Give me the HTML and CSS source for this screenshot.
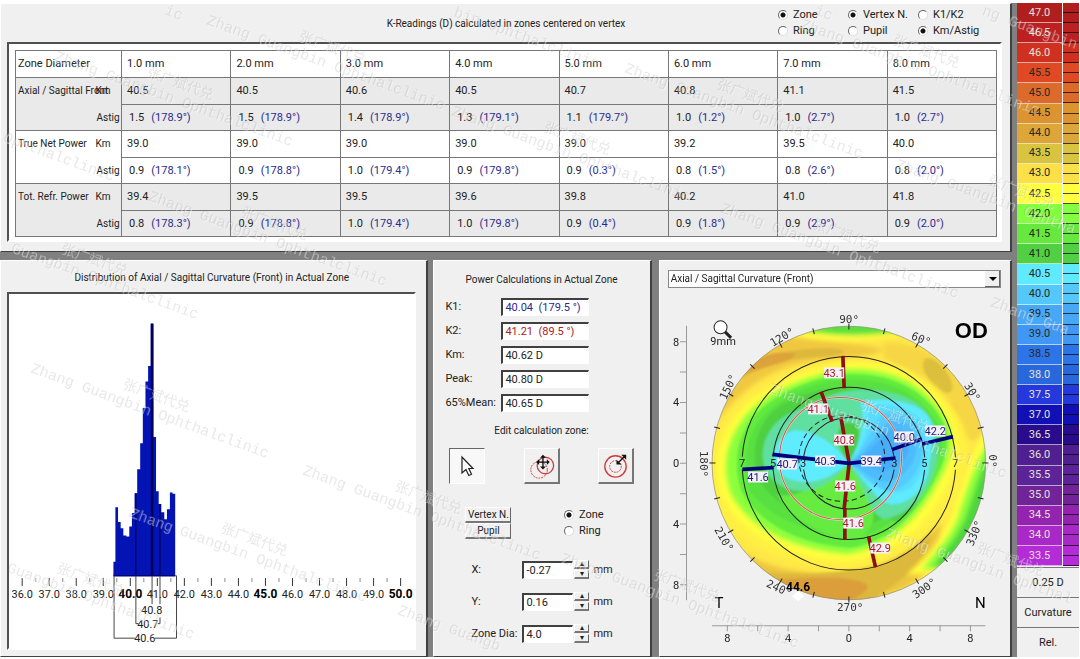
FILE: index.html
```html
<!DOCTYPE html>
<html lang="en">
<head>
<meta charset="utf-8">
<title>Power Distribution</title>
<link rel="stylesheet" href="styles.css">
</head>
<body>
<div class="app">
  <main class="main">
    <section class="panel readings">
      <header class="readings-head">
        <h1 class="title">K-Readings (D) calculated in zones centered on vertex</h1>
        <div class="options">
          <label class="opt"><input type="radio" name="shape" checked>Zone</label>
          <label class="opt"><input type="radio" name="center" checked>Vertex N.</label>
          <label class="opt"><input type="radio" name="mode">K1/K2</label>
          <label class="opt"><input type="radio" name="shape">Ring</label>
          <label class="opt"><input type="radio" name="center">Pupil</label>
          <label class="opt"><input type="radio" name="mode" checked>Km/Astig</label>
        </div>
      </header>
      <div class="sunken table-box">
        <table class="k-table">
          <colgroup><col class="col-name"><col class="col-kind"><col span="8"></colgroup>
          <thead>
            <tr><th colspan="2" class="zone">Zone Diameter</th><th>1.0 mm</th><th>2.0 mm</th><th>3.0 mm</th><th>4.0 mm</th><th>5.0 mm</th><th>6.0 mm</th><th>7.0 mm</th><th>8.0 mm</th></tr>
          </thead>
          <tbody class="shade">
            <tr><th rowspan="2" class="name">Axial / Sagittal Front</th><th class="kind">Km</th><td>40.5</td><td>40.5</td><td>40.6</td><td>40.5</td><td>40.7</td><td>40.8</td><td>41.1</td><td>41.5</td></tr>
            <tr class="astig"><th class="kind">Astig</th><td>1.5<i>(178.9°)</i></td><td>1.5<i>(178.9°)</i></td><td>1.4<i>(178.9°)</i></td><td>1.3<i>(179.1°)</i></td><td>1.1<i>(179.7°)</i></td><td>1.0<i>(1.2°)</i></td><td>1.0<i>(2.7°)</i></td><td>1.0<i>(2.7°)</i></td></tr>
          </tbody>
          <tbody>
            <tr><th rowspan="2" class="name">True Net Power</th><th class="kind">Km</th><td>39.0</td><td>39.0</td><td>39.0</td><td>39.0</td><td>39.0</td><td>39.2</td><td>39.5</td><td>40.0</td></tr>
            <tr class="astig"><th class="kind">Astig</th><td>0.9<i>(178.1°)</i></td><td>0.9<i>(178.8°)</i></td><td>1.0<i>(179.4°)</i></td><td>0.9<i>(179.8°)</i></td><td>0.9<i>(0.3°)</i></td><td>0.8<i>(1.5°)</i></td><td>0.8<i>(2.6°)</i></td><td>0.8<i>(2.0°)</i></td></tr>
          </tbody>
          <tbody class="shade">
            <tr><th rowspan="2" class="name">Tot. Refr. Power</th><th class="kind">Km</th><td>39.4</td><td>39.5</td><td>39.5</td><td>39.6</td><td>39.8</td><td>40.2</td><td>41.0</td><td>41.8</td></tr>
            <tr class="astig"><th class="kind">Astig</th><td>0.8<i>(178.3°)</i></td><td>0.9<i>(178.8°)</i></td><td>1.0<i>(179.4°)</i></td><td>1.0<i>(179.8°)</i></td><td>0.9<i>(0.4°)</i></td><td>0.9<i>(1.8°)</i></td><td>0.9<i>(2.9°)</i></td><td>0.9<i>(2.0°)</i></td></tr>
          </tbody>
        </table>
      </div>
    </section>

    <div class="lower">
      <section class="panel histogram">
        <h2 class="title">Distribution of Axial / Sagittal Curvature (Front) in Actual Zone</h2>
        <div class="sunken chart-box">
          <svg class="chart" viewBox="8 294 409 350" role="img" aria-label="Curvature histogram">
            <g transform="translate(0 255) scale(.33333)">
              <path id="bars" fill="#0414b4"/>
              <path d="M453 196h8v763h-8z" fill="#000070"/>
              <path d="M340 959h187" stroke="#000080" stroke-width="4"/>
              <path d="M408 709V959M481 742V959M457 196V959" stroke="#000040" stroke-width="3"/>
              <path d="M342 959V1148H405M466 1148H531V959H527M408 959V1104H416M474 1104H481V1085M457 959V1045M481 959V1045" fill="none" stroke="#444" stroke-width="3"/>
            </g>
            <g id="axis"></g>
            <g class="tick-label">
              <text x="152" y="613">40.8</text><text x="148" y="627">40.7</text><text x="145" y="642">40.6</text>
            </g>
          </svg>
        </div>
      </section>

      <section class="panel power">
        <h2 class="title">Power Calculations in Actual Zone</h2>
        <div class="values">
          <label for="k1">K1:</label><input id="k1" class="field blue" value="40.04  (179.5 °)">
          <label for="k2">K2:</label><input id="k2" class="field red" value="41.21  (89.5 °)">
          <label for="km">Km:</label><input id="km" class="field" value="40.62 D">
          <label for="peak">Peak:</label><input id="peak" class="field" value="40.80 D">
          <label for="mean">65%Mean:</label><input id="mean" class="field" value="40.65 D">
        </div>
        <p class="caption">Edit calculation zone:</p>
        <div class="tools">
          <button class="tool pressed" aria-label="Select"><svg viewBox="0 0 34 34"><path d="M12 8V24L16 20.500L18.800 26.500L21.500 25.300L18.800 19.500H23Z" fill="#fff" stroke="#222" stroke-width="1.200"/></svg></button>
          <button class="tool" aria-label="Move zone"><svg viewBox="0 0 34 34"><circle cx="14.500" cy="21.500" r="8.500" fill="none" stroke="#d03c3c" stroke-dasharray="2 1"/><circle cx="21" cy="17" r="8.500" fill="none" stroke="#d03c3c" stroke-width="1.300"/><path d="M18.500 8V19M13 13.500H24" stroke="#111" stroke-width="1.400"/><path d="M18.500 6l3 3h-6zM18.500 21l3-3h-6zM11.500 13.500l3-3v6zM25.500 13.500l-3-3v6z" fill="#111"/></svg></button>
          <button class="tool" aria-label="Resize zone"><svg viewBox="0 0 34 34"><circle cx="17" cy="18" r="11" fill="none" stroke="#d03c3c" stroke-width="1.400"/><circle cx="17" cy="18" r="6" fill="none" stroke="#d03c3c" stroke-dasharray="2 1"/><path d="M19 15L27 7" stroke="#111" stroke-width="1.300"/><path d="M28 6v5l-5-5zM18 16v-5l5 5z" fill="#111"/></svg></button>
        </div>
        <div class="anchor">
          <div class="anchor-buttons"><button class="push">Vertex N.</button><button class="push">Pupil</button></div>
          <div class="anchor-radios">
            <label class="opt"><input type="radio" name="calc" checked>Zone</label>
            <label class="opt"><input type="radio" name="calc">Ring</label>
          </div>
        </div>
        <div class="position">
          <label for="x">X:</label><input id="x" class="field" value="-0.27"><span class="spin"><button aria-label="Increase X">▴</button><button aria-label="Decrease X">▾</button></span><span>mm</span>
          <label for="y">Y:</label><input id="y" class="field" value="0.16"><span class="spin"><button aria-label="Increase Y">▴</button><button aria-label="Decrease Y">▾</button></span><span>mm</span>
          <label for="dia">Zone Dia:</label><input id="dia" class="field" value="4.0"><span class="spin"><button aria-label="Increase diameter">▴</button><button aria-label="Decrease diameter">▾</button></span><span>mm</span>
        </div>
      </section>

      <section class="panel map">
        <div class="select-wrap">
          <select class="map-select" aria-label="Map type"><option>Axial / Sagittal Curvature (Front)</option></select>
          <span class="arrow" aria-hidden="true"></span>
        </div>
        <svg class="cornea" viewBox="668 289 333 366" role="img" aria-label="Corneal curvature map">
          <defs>
            <clipPath id="disc"><circle cx="596" cy="624" r="410"/></clipPath>
            <filter id="soft" x="-10%" y="-10%" width="120%" height="120%"><feGaussianBlur stdDeviation="8"/></filter>
            <filter id="fine" x="-10%" y="-10%" width="120%" height="120%"><feGaussianBlur stdDeviation="3"/></filter>
          </defs>
          <g transform="translate(650 255) scale(.33333)">
            <g clip-path="url(#disc)">
              <rect x="180" y="210" width="830" height="830" fill="#ffe848"/>
              <g filter="url(#soft)">
                <path d="M200 470C260 370 330 260 430 245C520 262 680 268 700 285C640 320 500 305 400 340C320 375 270 410 200 500Z" fill="#f0c840"/>
                <path d="M700 262C820 260 940 330 1000 480C1010 560 960 580 920 530C870 430 790 350 700 310Z" fill="#f6d644"/>
                <path d="M190 800C280 930 400 950 560 960C700 950 800 870 860 780C890 850 860 930 780 990C620 1080 330 1060 220 900Z" fill="#ecc640"/>
              </g>
              <g filter="url(#fine)">
                <path d="M310 345C360 290 430 282 530 280C600 280 600 300 520 305C420 310 360 330 310 345Z" fill="#dcb83c"/>
                <path d="M262 372C290 315 360 285 435 295C430 325 350 325 262 372Z" fill="#dca23a"/>
                <ellipse cx="862" cy="362" rx="62" ry="28" transform="rotate(52 862 362)" fill="#dcc03e"/>
                <ellipse cx="922" cy="500" rx="60" ry="16" transform="rotate(70 922 500)" fill="#f4cc40"/>
                <path d="M330 950C480 965 600 950 700 925C790 890 830 830 845 820C850 870 800 960 650 1040L420 1040Z" fill="#dcb83c"/>
                <path d="M370 975C450 970 540 960 610 975C690 990 640 1010 600 1040H420Z" fill="#dc9e3a"/>
              </g>
              <g filter="url(#soft)">
                <path d="M400 232C520 262 660 262 780 232L740 190H430Z" fill="#ffff3c"/>
                <path d="M430 222C540 246 660 246 755 228L730 180H430Z" fill="#58e03c"/>
                <path d="M1010 520C960 600 930 690 910 760C890 830 840 900 770 960L1010 940Z" fill="#ffff3c"/>
                <path d="M1020 550C970 630 950 700 930 760C910 840 860 880 815 945L1020 920Z" fill="#8cff3c"/>
                <path d="M1020 580C985 660 965 740 940 800C910 860 880 890 845 940L1020 920Z" fill="#4ed63e"/>
              </g>
              <g filter="url(#soft)">
                <path d="M600 315C480 320 330 380 255 460C170 560 170 660 205 760C250 850 360 932 590 938C740 930 850 850 905 750C960 660 970 560 930 490C860 370 760 312 600 315Z" fill="#ffef42"/>
                <path d="M600 326C480 336 340 400 275 465C200 550 190 640 215 720C260 820 380 905 590 918C730 900 830 810 885 700C930 620 930 550 905 490C850 385 750 322 600 326Z" fill="#ffff3c"/>
                <path d="M600 341C480 353 350 410 290 475C220 560 215 640 240 715C285 805 400 880 590 898C720 880 810 785 865 680C905 610 915 560 893 500C840 400 740 338 600 341Z" fill="#8cff3e"/>
              </g>
              <g filter="url(#fine)">
                <path d="M600 358C480 365 360 425 305 490C255 560 250 640 275 710C320 790 420 865 600 878C720 860 800 770 850 680C888 610 902 560 880 505C830 410 730 355 600 358Z" fill="#62ea3e"/>
                <path d="M600 375C500 372 380 430 325 500C285 560 275 640 300 710C360 785 460 830 600 850C710 835 780 760 830 680C870 610 885 570 868 515C810 420 730 372 600 375Z" fill="#58e040"/>
                <path d="M600 400C500 395 400 430 350 490C300 560 305 650 345 700C400 770 500 810 600 820C710 810 770 740 820 670C860 610 870 570 850 515C800 430 700 395 600 400Z" fill="#50d040"/>
                <path d="M596 624C500 700 430 730 380 720C440 810 540 850 620 850C690 820 690 740 596 624Z" fill="#66ec40"/>
                <path d="M596 624C660 700 690 790 740 800C800 770 830 700 820 640Z" fill="#50d040"/>
                <path d="M596 624C560 500 500 480 430 470C360 500 335 560 338 610C345 680 410 710 460 708C530 700 570 660 596 624C640 690 660 780 700 792C770 785 830 720 852 650C880 570 860 490 800 445C720 395 600 395 530 425C480 445 450 465 430 470Z" fill="#5fdfa0"/>
                <path d="M596 624C545 560 560 505 596 503C640 505 632 560 596 624Z" fill="#4ecb3f"/>
                <path d="M596 624C540 550 480 525 430 527C385 545 365 580 375 630C390 670 430 682 480 680C530 675 570 645 596 624Z" fill="#5fecff"/>
                <path d="M596 624C625 580 650 510 630 440C700 425 800 440 830 480C870 530 840 580 835 650C820 710 770 750 720 748C670 730 640 670 596 624Z" fill="#5feaff"/>
                <path d="M596 624C640 580 665 500 650 455C720 440 800 460 825 520C840 590 820 660 780 700C730 735 650 690 596 624Z" fill="#5adcff"/>
                <path d="M596 624C650 580 665 510 700 475C780 460 825 520 818 590C805 670 750 715 700 705C650 680 630 645 596 624Z" fill="#54ccff"/>
                <path d="M596 624C655 590 680 530 720 495C780 490 805 540 798 590C785 650 730 690 685 678C650 660 625 635 596 624Z" fill="#4ebcfc"/>
                <path d="M596 624C660 600 690 545 725 520C760 520 780 550 775 590C760 630 720 655 680 645C650 635 620 628 596 624Z" fill="#4aaefa"/>
              </g>
            </g>
            <circle cx="596" cy="624" r="410" fill="none" stroke="#888" stroke-width="2"/>
            <g fill="none" stroke="#222" stroke-width="3">
              <circle cx="596" cy="625" r="320" pathLength="360" stroke-dasharray="173 7" stroke-dashoffset="-3.500"/>
              <circle cx="596" cy="625" r="228" pathLength="360" stroke-dasharray="170 10" stroke-dashoffset="-5"/>
              <circle cx="596" cy="625" r="137" pathLength="360" stroke-dasharray="164 16" stroke-dashoffset="-8"/>
              <circle cx="575" cy="610" r="129" stroke-dasharray="16 10"/>
            </g>
            <circle cx="571" cy="611" r="183" fill="none" stroke="#e8e0d0" stroke-width="6"/>
            <circle cx="571" cy="611" r="183" fill="none" stroke="#c85a50" stroke-width="3"/>
            <g fill="none" stroke="#8c1010" stroke-width="11">
              <path d="M578 303L582 400M513 411L546 500M572 487L597 624L582 760M584 760V855M655 844L676 937"/>
            </g>
            <g fill="none" stroke="#00007c" stroke-width="11">
              <path d="M367 598L597 625L736 609M725 584L815 552M816 567L908 545M277 643L371 638"/>
            </g>
          </g>
          <g id="rulers"></g>
          <g id="marks"></g>
          <g id="angles" class="angle"></g>
          <path d="M798 591l6 5-6 5-6-5z" fill="#fff"/>
          <text x="798" y="591" class="peak">44.6</text>
          <circle cx="720.500" cy="327.500" r="6.500" fill="#fff" stroke="#222"/>
          <path d="M725 332l6 6" stroke="#222" stroke-width="3"/>
          <text x="723" y="345" class="tick-label">9mm</text>
          <text x="971" y="338" class="eye">OD</text>
          <text x="719" y="608" class="side">T</text>
          <text x="980" y="608" class="side">N</text>
        </svg>
      </section>
    </div>
  </main>

  <aside class="scale">
    <div class="legend">
      <ol id="steps" class="steps"></ol>
      <div id="strip" class="strip"></div>
    </div>
    <button class="scale-button">0.25 D</button>
    <button class="scale-button">Curvature</button>
    <button class="scale-button">Rel.</button>
  </aside>
</div>
<svg id="watermark" class="watermark" viewBox="0 0 1080 659" aria-hidden="true"></svg>
<script src="app.js"></script>
</body>
</html>
```

FILE: styles.css
```css
* { box-sizing: border-box; }
body {
  margin: 0;
  background: #fff;
  color: #222;
  font: 11px/16px Roboto, "Liberation Sans", sans-serif;
}
button, input, select { font: inherit; color: inherit; margin: 0; border-radius: 0; }
h1, h2, p { margin: 0; font: inherit; }
.app {
  position: relative;
  display: grid;
  grid-template-columns: 1fr 62px;
  gap: 5px;
  min-height: 100vh;
  padding: 3px 1px 2px 0;
}
.main {
  display: flex;
  flex-direction: column;
  gap: 8px;
  background: #808080;
  box-shadow: 5px 0 #808080;
}
.panel {
  background: #f0f0f0;
  border: 1px solid #fff;
  border-right: 2px solid #404040;
  border-bottom-color: #404040;
}
.title { text-align: center; font-size: 10px; }
.sunken {
  background: #fff;
  border: 2px solid #fff;
  border-top-color: #505050;
  border-left-color: #505050;
}

/* readings table */
.readings { padding: 2px 8px 9px 6px; }
.readings-head {
  display: grid;
  grid-template-columns: 1fr auto;
  align-items: center;
  min-height: 36px;
}
.readings-head .title { padding-left: 227px; }
.options {
  display: grid;
  grid-template-columns: 70px 70px 84px;
  padding-bottom: 2px;
}
.opt { display: flex; align-items: center; gap: 5px; height: 16px; }
.opt input {
  appearance: none;
  width: 10px;
  height: 10px;
  border: 1px solid #ddd;
  border-top-color: #666;
  border-left-color: #666;
  border-radius: 50%;
  background: #fff;
}
.opt input:checked { background: radial-gradient(circle, #111 2px, #fff 3px); }
.table-box { padding: 6px 3px 3px 6px; }
.k-table {
  width: 100%;
  table-layout: fixed;
  border-collapse: collapse;
  border: 1px solid #777;
}
.col-name { width: 80px; }
.col-kind { width: 26px; }
.k-table th, .k-table td {
  padding: 5px;
  border: 1px solid #777;
  font-weight: normal;
  text-align: left;
  white-space: nowrap;
}
.k-table .astig > * { line-height: 15px; }
.k-table .zone { padding-left: 2px; }
.k-table .name { vertical-align: top; padding: 5px 0 0 2px; border-right: 0; font-size: 10px; }
.k-table .kind { border-width: 0 1px 0 0; padding: 5px 0; font-size: 10px; }
.k-table .astig .kind { padding-left: 1px; }
.k-table tbody { border-top: 1px solid #777; }
.shade { background: #eaeaea; }
.k-table .astig td { padding-left: 7px; }
.astig i { font-style: normal; color: #2a2a90; margin-left: 7px; }

/* lower row */
.lower {
  flex: 1;
  display: grid;
  grid-template-columns: 428fr 218fr 355fr;
  column-gap: 5px;
}
.histogram { display: flex; flex-direction: column; padding: 9px 10px 6px 6px; }
.histogram .title { padding-bottom: 6px; }
.chart-box { flex: 1; display: flex; }
.chart { width: 100%; height: 100%; display: block; }
.tick-label { font-size: 11px; text-anchor: middle; fill: #222; }
.major { font-size: 12px; font-weight: bold; fill: #000; }

.power { padding: 11px 12px 6px 11px; }
.values {
  display: grid;
  grid-template-columns: 56px 88px;
  row-gap: 6px;
  align-items: center;
  padding-top: 10px;
}
.field {
  width: 100%;
  height: 18px;
  padding: 0 2px;
  background: #fff;
  border: 1px solid #fff;
  border-top: 2px solid #404040;
  border-left: 2px solid #404040;
  white-space: pre;
}
.blue { color: #2a2a90; }
.red { color: #b02020; }
.caption { text-align: center; padding: 11px 0 9px; font-size: 10px; }
.tools { display: flex; justify-content: space-between; padding: 0 4px; }
.tool {
  width: 36px;
  height: 36px;
  padding: 0;
  background: #f0f0f0;
  border: 1px solid #fff;
  border-right: 2px solid #777;
  border-bottom: 2px solid #777;
}
.tool svg { display: block; width: 100%; }
.pressed { border: 1px solid #fff; border-top-color: #666; border-left-color: #666; background: #f8f8f8; }
.anchor { display: flex; justify-content: space-between; padding: 23px 34px 0 20px; }
.anchor-buttons { display: flex; flex-direction: column; }
.push {
  width: 46px;
  height: 16px;
  padding: 0;
  font-size: 10px;
  line-height: 13px;
  white-space: nowrap;
  background: #f0f0f0;
  border: 1px solid #fff;
  border-right-color: #666;
  border-bottom: 2px solid #777;
}
.position {
  display: grid;
  grid-template-columns: 51px 51px 16px auto;
  row-gap: 13px;
  align-items: center;
  padding: 21px 0 0 26px;
  white-space: nowrap;
}
.position .spin { padding-left: 1px; }
.position > span:nth-child(4n) { padding-left: 4px; }
.spin { display: grid; grid-template-rows: 9px 9px; row-gap: 1px; }
.spin button {
  padding: 0;
  font-size: 8px;
  line-height: 6px;
  background: #f0f0f0;
  border: 1px solid #fff;
  border-right-color: #666;
  border-bottom: 2px solid #777;
}

.map { margin-left: 2px; padding: 9px 9px 0 8px; display: flex; flex-direction: column; }
.select-wrap { position: relative; }
.map-select {
  appearance: none;
  display: block;
  width: 100%;
  height: 18px;
  padding: 0 2px;
  font-size: 10px;
  background: #fff;
  border: 1px solid #888;
}
.arrow {
  position: absolute;
  top: 1px;
  right: 1px;
  width: 15px;
  height: 16px;
  background: #f0f0f0;
  border-right: 1px solid #666;
  border-bottom: 1px solid #666;
  pointer-events: none;
}
.arrow::after {
  content: "";
  position: absolute;
  top: 6px;
  left: 4px;
  border: 4px solid transparent;
  border-top-color: #000;
  border-bottom: 0;
}
.cornea { flex: 1; display: block; width: 100%; min-height: 0; overflow: visible; }
.angle { font: 11px "DejaVu Sans Mono", monospace; text-anchor: middle; fill: #333; }
.peak { font-size: 12px; font-weight: bold; text-anchor: middle; }
.eye { font: bold 22px "Liberation Sans", sans-serif; text-anchor: middle; fill: #000; }
.side { font-size: 15px; text-anchor: middle; }

/* colour scale */
.scale { display: flex; flex-direction: column; background: #f0f0f0; }
.legend { flex: 1; display: grid; grid-template-columns: 45px 1fr; column-gap: 1px; padding-bottom: 1px; }
.steps { display: flex; flex-direction: column; margin: 0; padding: 0; list-style: none; }
.steps li {
  flex: 1;
  display: flex;
  align-items: center;
  justify-content: center;
  border-bottom: 1px solid rgba(255, 255, 255, .6);
}
.strip { display: flex; flex-direction: column; }
.strip span { flex: 1; border-bottom: 1px solid rgba(0, 0, 0, .7); }
.scale-button {
  height: 30px;
  padding: 0;
  background: #f0f0f0;
  border: 0;
  border-top: 1px solid #777;
}

.watermark { position: absolute; inset: 0; width: 100%; height: 100%; pointer-events: none; }
.watermark text { font: 15px "Liberation Mono", monospace; }
.watermark .cjk { font: 14px "Noto Sans CJK SC", sans-serif; }
```

FILE: app.js
```js
const ns = "http://www.w3.org/2000/svg";
const add = (parent, name, attrs, text) => {
  const el = document.createElementNS(ns, name);
  for (const key in attrs) el.setAttribute(key, attrs[key]);
  if (text) el.textContent = text;
  parent.appendChild(el);
  return el;
};
const byId = id => document.getElementById(id);

// Histogram bars: left edge and top of each 0.1 D class
const edges = [340, 346, 354, 362, 370, 379, 388, 396, 404, 412, 421, 429, 437, 445, 453, 461, 469, 477, 485, 494, 502, 511, 519, 527];
const tops = [917, 752, 796, 815, 837, 840, 810, 769, 709, 637, 558, 451, 371, 324, 196, 539, 703, 742, 767, 788, 758, 707, 711];
byId("bars").setAttribute("d", "M340 959" + tops.map((t, i) => `V${t}H${edges[i + 1]}`).join("") + "V959Z");

const axis = byId("axis");
for (let v = 36; v <= 50; v += 0.5) {
  const x = 21.3 + (v - 36) * 27.27;
  const whole = v % 1 === 0;
  add(axis, "path", { d: `M${x} 577v${whole ? 8 : 4}`, stroke: whole ? "#333" : "#888" });
  if (whole) {
    const major = v % 5 === 0;
    add(axis, "text", { x, y: 597, class: "tick-label" + (major ? " major" : "") }, v.toFixed(1));
  }
}

// Millimetre rulers beside and below the map
const rulers = byId("rulers");
add(rulers, "path", { d: "M686.500 326V600M712 625.500H985", stroke: "#999" });
for (let mm = -8; mm <= 8; mm += 2) {
  const d = mm * 15.18;
  add(rulers, "path", { d: `M${848.7 + d} 625v6M686 ${463.3 + d}h-6`, stroke: "#999" });
  if (mm % 4 === 0) {
    const label = String(Math.abs(mm));
    add(rulers, "text", { x: 848.7 + d, y: 642, class: "tick-label" }, label);
    add(rulers, "text", { x: 676, y: 467.3 + d, class: "tick-label" }, label);
  }
}

const marks = byId("marks");
for (let a = 0; a < 360; a += 15) {
  add(marks, "path", { d: "M988 463h-6", transform: `rotate(${a} 848.7 463)`, stroke: "#222" });
}
[[742, 7], [773, 5], [803, 3], [894, 3], [924, 5], [955, 7]].forEach(([x, n]) =>
  add(marks, "text", { x, y: 467, class: "tick-label" }, n));

const red = "#b01828", blue = "#181878";
[["43.1", 834, 373, red], ["41.1", 818, 409, red], ["40.8", 844, 440, red], ["41.6", 845, 486, red],
 ["41.6", 853, 523, red], ["42.9", 880, 548, red], ["40.7", 787, 464, blue], ["40.3", 825, 461, blue],
 ["39.4", 871, 461, blue], ["40.0", 904, 437, blue], ["42.2", 935, 431, blue], ["41.6", 758, 477, blue]
].forEach(([text, x, y, fill]) => {
  add(marks, "rect", { x: x - 10, y: y - 5.5, width: 20, height: 11, fill: "#f4f0f8" });
  add(marks, "text", { x, y: y + 4, class: "tick-label", style: `fill:${fill}` }, text);
});

[["90°", 849, 319, 0], ["120°", 782, 337, -30], ["60°", 921, 339, 22], ["150°", 728, 387, -65],
 ["30°", 972, 392, 58], ["180°", 704, 464, 90], ["0°", 993, 461, 90], ["210°", 724, 539, 60],
 ["330°", 974, 533, -68], ["240°", 779, 588, 25], ["300°", 924, 588, -35], ["270°", 850, 607, 0]
].forEach(([text, x, y, turn]) =>
  add(byId("angles"), "text", { x, y: y + 4, transform: `rotate(${turn} ${x} ${y})` }, text));

// Colour scale
const colors = ["#b01e1e", "#bc2020", "#d03020", "#df4a24", "#dc6a2a", "#dc9430", "#dca638", "#d8c440", "#fbe048", "#ffff40",
  "#84ff40", "#66e83e", "#52d044", "#5feaff", "#54c8fa", "#48a8f8", "#4098f4", "#2c74e8", "#2868dc", "#2438dc",
  "#1010b4", "#280c8c", "#502090", "#5c2498", "#702498", "#9424b0", "#a828c8", "#b42cd8"];
colors.forEach((color, i) => {
  const li = document.createElement("li");
  li.textContent = (47 - i / 2).toFixed(1);
  li.style.background = color;
  li.style.color = i < 3 || i > 17 ? "#e8e0d8" : "#2a2a20";
  byId("steps").appendChild(li);
});
for (let i = 0; i < 56; i++) {
  const span = document.createElement("span");
  span.style.background = colors[Math.floor(i / 2)];
  byId("strip").appendChild(span);
}

// Clinic watermark; only the letters that fall on the sheet are drawn
const sheet = byId("watermark");
const words = "Zhang Guangbin Ophthalclinic";
const stepX = 8.46, stepY = 3.08;
[[206, 24], [54, 60], [-116, 98], [451, 115], [148, 200], [-56, -66], [624, 72], [360, -18], [800, 28], [895, 168],
 [720, 212], [956, 5], [30, 372], [302, 474], [128, 516], [-36, 556], [-32, 236], [397, 614], [560, 562], [768, 392],
 [884, 536], [990, 306], [594, -66]
].forEach(([x, y]) => {
  const inside = [...words].map((_, i) => {
    const px = x + i * stepX, py = y + i * stepY;
    return px > 2 && px < 1066 && py > 13 && py < 648;
  });
  const first = inside.indexOf(true), last = inside.lastIndexOf(true);
  const showCjk = x + 92 > 2 && x + 160 < 1078 && y > 4 && y < 612;
  [[1, "#fff", 0.4], [0, "#888", 0.19]].forEach(([d, fill, opacity]) => {
    const g = add(sheet, "g", { transform: `translate(${x + d} ${y + d})`, fill, opacity });
    if (first >= 0) {
      add(g, "text", { transform: `translate(${first * stepX} ${first * stepY}) rotate(20)` }, words.slice(first, last + 1));
    }
    if (showCjk) add(g, "text", { transform: "translate(92 16) rotate(20)", class: "cjk" }, "张广斌代兑");
  });
});
```
